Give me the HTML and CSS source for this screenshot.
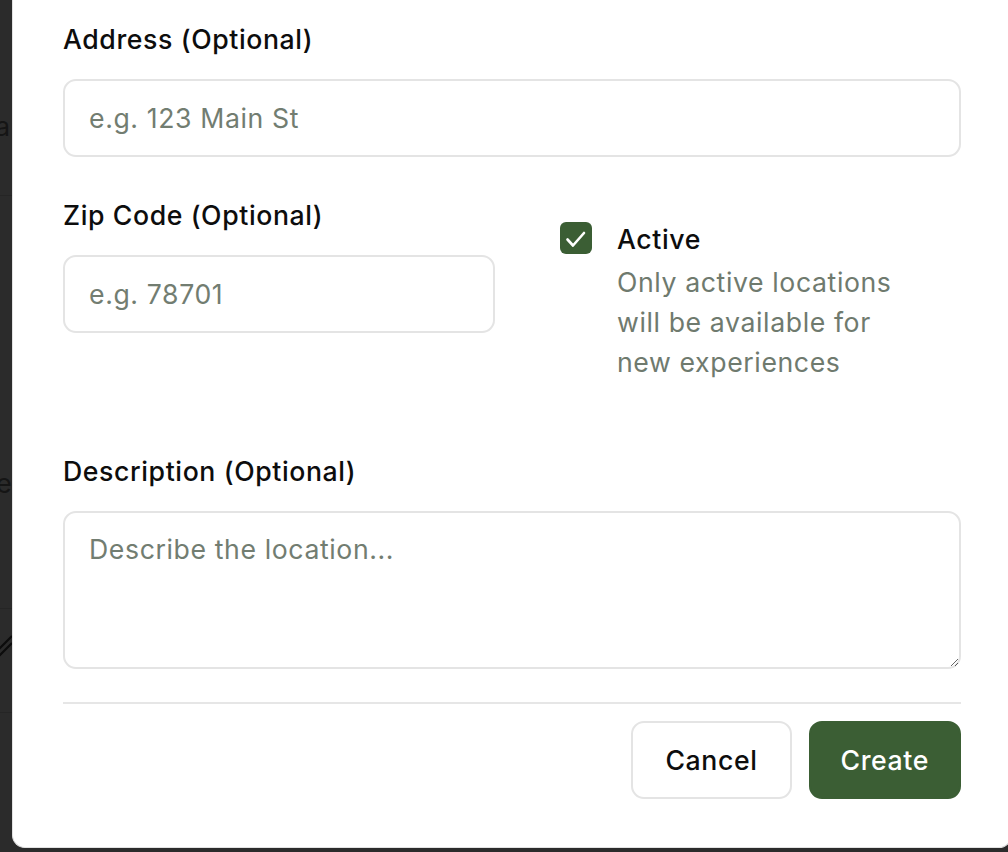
FILE: index.html
```html
<!DOCTYPE html>
<html lang="en">
<head>
<meta charset="utf-8">
<title>New Location</title>
<link rel="stylesheet" href="styles.css">
</head>
<body>
<div class="backdrop" aria-hidden="true">
  <span class="bg-line bg-line-1"></span>
  <span class="bg-text bg-text-1">a</span>
  <span class="bg-text bg-text-2">er</span>
  <span class="bg-line bg-line-2"></span>
  <svg class="bg-handle" width="14" height="30" viewBox="0 0 14 30"><path d="M0 22 L14 8 M0 29 L14 15" stroke="#0c0c0c" stroke-width="2.2" fill="none"/></svg>
  <span class="bg-line bg-line-3"></span>
</div>
<div class="page">
  <form class="modal">
    <div class="field">
      <label class="label" for="address">Address (Optional)</label>
      <input class="input" id="address" type="text" placeholder="e.g. 123 Main St">
    </div>

    <div class="row">
      <div class="field">
        <label class="label" for="zip">Zip Code (Optional)</label>
        <input class="input" id="zip" type="text" placeholder="e.g. 78701">
      </div>
      <div class="active-cell">
        <span class="checkbox">
          <svg width="32" height="32" viewBox="0 0 32 32"><path d="M7.5 17.5 L13 23.5 L24 11" stroke="#fff" stroke-width="2.6" fill="none" stroke-linecap="round" stroke-linejoin="round"/></svg>
        </span>
        <div class="active-text">
          <div class="active-title">Active</div>
          <div class="active-desc">Only active locations<br>will be available for<br>new experiences</div>
        </div>
      </div>
    </div>

    <div class="field field-desc">
      <label class="label" for="desc">Description (Optional)</label>
      <textarea class="textarea" id="desc" placeholder="Describe the location..."></textarea>
    </div>

    <div class="footer">
      <button type="button" class="btn btn-cancel">Cancel</button>
      <button type="button" class="btn btn-create">Create</button>
    </div>
  </form>
</div>
</body>
</html>
```

FILE: styles.css
```css
html, body {
  margin: 0;
  padding: 0;
  height: 100%;
  overflow: hidden;
}

body {
  background: #2b2b2b;
  font-family: Inter, "Noto Sans", "Liberation Sans", sans-serif;
  position: relative;
}

.backdrop {
  position: absolute;
  left: 0;
  top: 0;
  width: 12px;
  height: 100%;
  overflow: hidden;
}

.bg-text {
  position: absolute;
  font-size: 27px;
  line-height: 40px;
  color: #151515;
}
.bg-text-1 { top: 107px; left: -5px; }
.bg-text-2 { top: 464px; left: -4px; }

.bg-line {
  position: absolute;
  left: 0;
  width: 12px;
  height: 1px;
  background: #252525;
}
.bg-line-1 { top: 195px; }
.bg-line-2 { top: 608px; }
.bg-line-3 { top: 712px; }

.bg-handle {
  position: absolute;
  top: 628px;
  left: -2px;
}

.page {
  padding-left: 12px;
}

.modal {
  box-sizing: border-box;
  width: 1000px;
  background: #fff;
  border: 1px solid #e2e2e2;
  border-top: none;
  border-radius: 0 0 13px 13px;
  padding: 19px 50px 48px 50px;
  letter-spacing: 0.6px;
}

.field {
  display: flex;
  flex-direction: column;
}

.label {
  font-size: 26.67px;
  line-height: 40px;
  font-weight: 500;
  color: #0d0d0d;
  margin-bottom: 20px;
}

.input,
.textarea {
  box-sizing: border-box;
  border: 2px solid #e4e4e4;
  border-radius: 13px;
  font-family: inherit;
  font-size: 26.67px;
  letter-spacing: 0.6px;
  color: #111;
  background: #fff;
  outline: none;
  margin: 0;
}

.input {
  height: 78px;
  padding: 0 24px;
}

.textarea {
  height: 158px;
  padding: 16px 24px;
  line-height: 40px;
  resize: vertical;
}

.input::placeholder,
.textarea::placeholder {
  color: #727d71;
  opacity: 1;
}

.row {
  display: grid;
  grid-template-columns: 432px 1fr;
  column-gap: 34px;
  margin-top: 38px;
}

.active-cell {
  display: flex;
  align-items: flex-start;
  gap: 25px;
  padding: 24px 0 0 31px;
}

.checkbox {
  flex: none;
  width: 32px;
  height: 32px;
  margin-top: 3px;
  border-radius: 6px;
  background: #3b5e34;
  display: block;
}

.checkbox svg {
  display: block;
}

.active-title {
  font-size: 26.67px;
  line-height: 40px;
  font-weight: 500;
  color: #0d0d0d;
}

.active-desc {
  margin-top: 3px;
  font-size: 26.67px;
  line-height: 40px;
  color: #6f7a6e;
}

.field-desc {
  margin-top: 69px;
}

.footer {
  margin-top: 33px;
  border-top: 2px solid #e6e6e6;
  padding-top: 17px;
  display: flex;
  justify-content: flex-end;
  gap: 17px;
}

.btn {
  box-sizing: border-box;
  height: 78px;
  border-radius: 13px;
  font-family: inherit;
  font-size: 26.67px;
  font-weight: 500;
  letter-spacing: 0.6px;
  cursor: pointer;
}

.btn-cancel {
  padding: 0 32px;
  background: #fff;
  color: #0d0d0d;
  border: 2px solid #e4e4e4;
}

.btn-create {
  padding: 0 30px;
  background: #3b5e34;
  color: #fff;
  border: 2px solid #3b5e34;
}
```
